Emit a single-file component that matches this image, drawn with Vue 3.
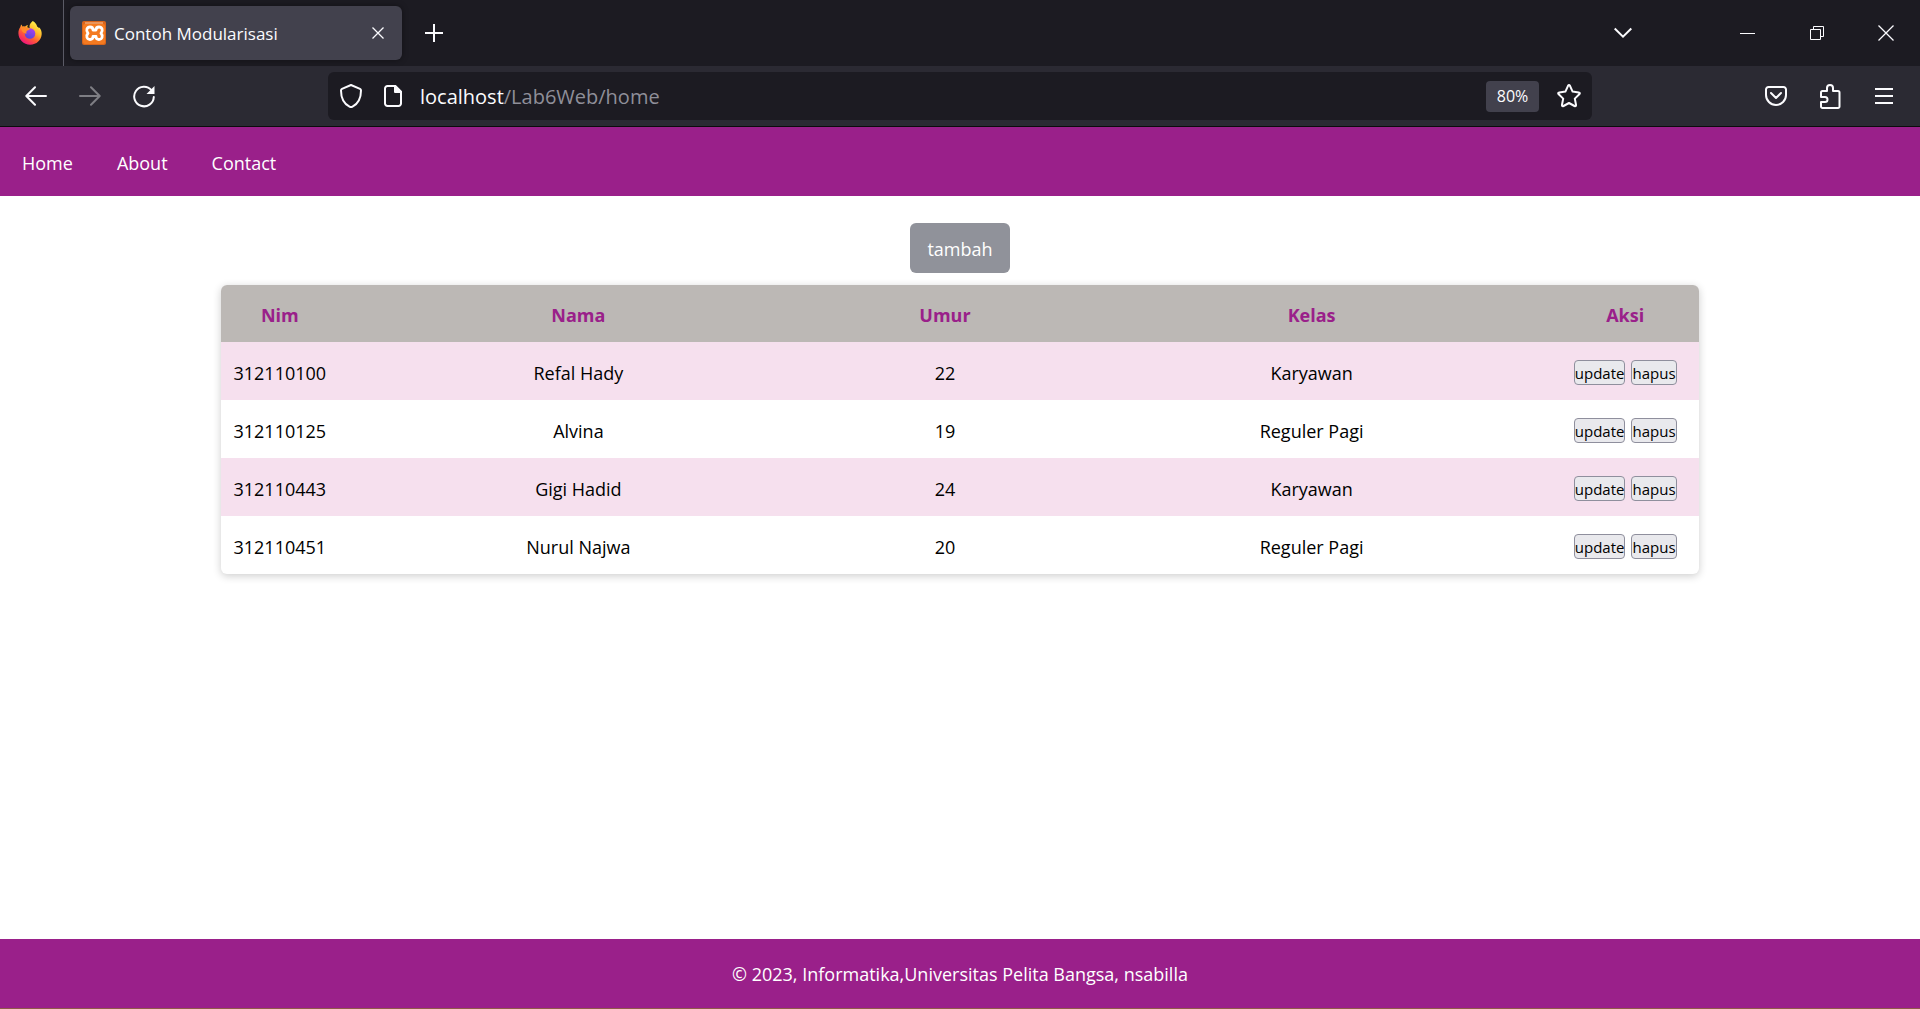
<script setup>
const links = ['Home', 'About', 'Contact']

const rows = [
  { nim: '312110100', nama: 'Refal Hady', umur: 22, kelas: 'Karyawan' },
  { nim: '312110125', nama: 'Alvina', umur: 19, kelas: 'Reguler Pagi' },
  { nim: '312110443', nama: 'Gigi Hadid', umur: 24, kelas: 'Karyawan' },
  { nim: '312110451', nama: 'Nurul Najwa', umur: 20, kelas: 'Reguler Pagi' },
]
</script>

<template>
  <div class="window">
    <header class="chrome">
      <div class="tab-strip">
        <div class="firefox-view">
          <svg width="24" height="24" viewBox="0 0 24 24" aria-hidden="true">
            <defs>
              <linearGradient id="flame" x1="0.8" y1="0.1" x2="0.25" y2="0.95">
                <stop offset="0" stop-color="#fff04a" />
                <stop offset="0.35" stop-color="#ffb52a" />
                <stop offset="0.65" stop-color="#ff5a36" />
                <stop offset="1" stop-color="#f0147c" />
              </linearGradient>
              <linearGradient id="globe" x1="0.8" y1="0" x2="0.3" y2="1">
                <stop offset="0" stop-color="#b13df0" />
                <stop offset="1" stop-color="#5146d9" />
              </linearGradient>
            </defs>
            <path fill="url(#flame)" d="M14.8 0c2.800 1.500 3.900 3.700 4.300 5.500.9.300 1.500 1 1.800 1.600.4-.2.500-.5.500-.5C23 8.500 23.800 10.600 23.700 13c-.3 6-5.200 10.700-11.500 10.700C5.500 23.700.5 18.500.4 12.300.3 9.200 1.500 7 2.400 5.900c0 0 .2-1.300 1.100-2.400l1 2.200c.8-.2 1.700-.1 2.500.1.800-1 2-1.600 3.200-1.700-.6.700-1 1.500-.9 2.100.500.500 1.300.7 2.500.800C10.900 4.500 12.500 1.500 14.800 0z" />
            <circle cx="12" cy="12.500" r="5.300" fill="url(#globe)" />
            <path fill="#ff8a2a" d="M2.700 6.500c2-1.400 4.600-1.200 6.300.2.700.5 1.800.7 2.800.7 0 1.200-1.300 1.800-2.500 2-1.200.9-1.200 2.400-.5 3.200-2.400-.1-4.200-1-4.700-2.600z" />
          </svg>
        </div>
        <div class="tab">
          <svg class="favicon" width="24" height="24" viewBox="0 0 24 24" aria-hidden="true">
            <rect width="24" height="24" rx="2" fill="#d9651b" />
            <rect x="1" y="3" width="22" height="20" rx="2" fill="#f47a20" />
            <path d="M3 2h18" stroke="#fbc79c" stroke-width="1" />
            <path fill="none" stroke="#fff" stroke-width="2.800" stroke-linejoin="round" d="M8 6c2.500 0 3 1.500 3 3h3c0-1.500.5-3 3-3 3 0 4.500 3.500 2 6.200 2.500 2.800 1 6.300-2 6.300-2.500 0-3-1.500-3-3h-3c0 1.500-.5 3-3 3-3 0-4.500-3.500-2-6.300-2.500-2.700-1-6.200 2-6.200z" />
          </svg>
          <span class="tab-title">Contoh Modularisasi</span>
          <button class="icon-button tab-close" aria-label="Close tab">
            <svg width="12" height="12" viewBox="0 0 12 12" stroke-width="1.300"><path d="M.5.5l11 11M11.500.5l-11 11" /></svg>
          </button>
        </div>
        <button class="icon-button new-tab" aria-label="New tab">
          <svg width="18" height="18" viewBox="0 0 18 18" stroke-width="2"><path d="M9 0v18M0 9h18" /></svg>
        </button>
        <div class="window-controls">
          <button class="icon-button list-tabs" aria-label="List all tabs">
            <svg width="18" height="12" viewBox="0 0 18 12" stroke-width="2"><path d="M.7 1.500L9 9.700l8.300-8.200" /></svg>
          </button>
          <button class="icon-button" aria-label="Minimize">
            <svg width="15" height="15" viewBox="0 0 15 15"><path d="M0 7.500h15" /></svg>
          </button>
          <button class="icon-button" aria-label="Restore">
            <svg width="14" height="14" viewBox="0 0 14 14"><path d="M.5 3.500h10v10H.5zM3.500 3.500v-3h10v10h-3" /></svg>
          </button>
          <button class="icon-button" aria-label="Close">
            <svg width="16" height="16" viewBox="0 0 16 16" stroke-width="1.300"><path d="M.5.5l15 15M15.500.5l-15 15" /></svg>
          </button>
        </div>
      </div>

      <div class="toolbar">
        <div class="nav-buttons">
          <button class="icon-button" aria-label="Back">
            <svg width="22" height="20" viewBox="0 0 22 20" stroke-width="2"><path d="M21 10H1.500M10 1.200L1.300 10l8.700 8.800" stroke-linecap="round" stroke-linejoin="round" /></svg>
          </button>
          <button class="icon-button dimmed" aria-label="Forward">
            <svg width="22" height="20" viewBox="0 0 22 20" stroke-width="2"><path d="M1 10h19.500M12 1.200l8.700 8.800-8.700 8.800" stroke-linecap="round" stroke-linejoin="round" /></svg>
          </button>
          <button class="icon-button" aria-label="Reload">
            <svg width="24" height="24" viewBox="0 0 24 24" stroke-width="2">
              <path d="M19.500 6.200A9.800 9.800 0 1 0 21.800 13" stroke-linecap="round" />
              <path d="M22.500 2v8h-8z" fill="#fbfbfe" stroke="none" />
            </svg>
          </button>
        </div>
        <div class="url-bar">
          <svg width="24" height="26" viewBox="0 0 24 26" stroke-width="2" stroke-linejoin="round" aria-hidden="true"><path d="M12 2l9 3.800q1 .5 1 1.600c0 8-3.500 13.500-8.500 16.200q-1.500.8-3 0C5.500 20.900 2 15.400 2 7.400q0-1.100 1-1.600z" /></svg>
          <svg class="page-icon" width="18" height="22" viewBox="0 0 18 22" stroke-width="2" stroke-linejoin="round" aria-hidden="true">
            <path d="M3.500 1h7.800L17 6.700v11.800a2.500 2.500 0 0 1-2.500 2.500h-11A2.500 2.500 0 0 1 1 18.500v-15A2.500 2.500 0 0 1 3.500 1z" />
            <path d="M11 1v6h6z" fill="#fbfbfe" />
          </svg>
          <div class="url"><span class="host">localhost</span>/Lab6Web/home</div>
          <button class="zoom-level">80%</button>
          <button class="icon-button bookmark" aria-label="Bookmark this page">
            <svg width="24" height="24" viewBox="0 0 24 24" stroke-width="2" stroke-linejoin="round"><path d="M11 1.900q1-1.600 2 0l2.600 5.700 6.100.8q1.900.4.600 1.900l-4.500 4.300 1.200 6.200q.2 1.900-1.500 1.200L12 19l-5.500 3q-1.700.7-1.500-1.200l1.200-6.200-4.500-4.300q-1.300-1.500.6-1.900l6.100-.8z" /></svg>
          </button>
        </div>
        <div class="menu-buttons">
          <button class="icon-button" aria-label="Save to Pocket">
            <svg width="22" height="20" viewBox="0 0 22 20" stroke-width="2" stroke-linejoin="round" stroke-linecap="round"><path d="M3.500 1h15A2.500 2.500 0 0 1 21 3.500V9a10 10 0 0 1-20 0V3.500A2.500 2.500 0 0 1 3.500 1zM6 7l5 5 5-5" /></svg>
          </button>
          <button class="icon-button" aria-label="Extensions">
            <svg width="22" height="26" viewBox="0 0 22 26" stroke-width="2" stroke-linejoin="round"><path d="M2 14V9.500A1.500 1.500 0 0 1 3.500 8H8V5a3 3 0 0 1 6 0v3h5a1.500 1.500 0 0 1 1.500 1.500v14A1.500 1.500 0 0 1 19 25H3.500A1.500 1.500 0 0 1 2 23.500V19h4a2.500 2.500 0 0 0 0-5z" /></svg>
          </button>
          <button class="icon-button" aria-label="Open application menu">
            <svg width="18" height="16" viewBox="0 0 18 16" stroke-width="2"><path d="M0 1h18M0 8h18M0 15h18" /></svg>
          </button>
        </div>
      </div>
    </header>

    <nav class="site-nav">
      <a v-for="link in links" :key="link" href="#">{{ link }}</a>
    </nav>

    <main class="content">
      <button class="add">tambah</button>
      <table class="students">
        <thead>
          <tr>
            <th class="col-nim">Nim</th>
            <th>Nama</th>
            <th class="col-umur">Umur</th>
            <th>Kelas</th>
            <th class="col-aksi">Aksi</th>
          </tr>
        </thead>
        <tbody>
          <tr v-for="row in rows" :key="row.nim">
            <td>{{ row.nim }}</td>
            <td>{{ row.nama }}</td>
            <td>{{ row.umur }}</td>
            <td>{{ row.kelas }}</td>
            <td>
              <div class="actions">
                <button>update</button>
                <button>hapus</button>
              </div>
            </td>
          </tr>
        </tbody>
      </table>
    </main>

    <footer class="site-footer">© 2023, Informatika,Universitas Pelita Bangsa, nsabilla</footer>
  </div>
</template>

<style>
body {
  margin: 0;
  background: #fff;
}
</style>

<style scoped>
.window {
  display: flex;
  flex-direction: column;
  min-height: 100vh;
  font-family: "Open Sans", "Noto Sans", sans-serif;
  font-size: 18px;
  line-height: 24px;
  color: #000;
}

button {
  box-sizing: border-box;
  margin: 0;
  font-family: inherit;
  cursor: pointer;
}

.chrome {
  color: #fbfbfe;
  background: #2b2a33;
  border-bottom: 1px solid #0c0c0d;
}

.chrome svg {
  display: block;
  flex: none;
  fill: none;
  stroke: #fbfbfe;
}

.firefox-view svg,
.chrome .favicon {
  stroke: none;
}

.icon-button {
  display: flex;
  align-items: center;
  justify-content: center;
  width: 48px;
  height: 48px;
  padding: 0;
  background: none;
  border: 0;
}

.tab-strip {
  display: flex;
  align-items: center;
  height: 66px;
  background: #1c1b22;
}

.firefox-view {
  display: flex;
  align-items: center;
  align-self: stretch;
  padding: 0 21px 0 18px;
  border-right: 1px solid #5b5b66;
}

.tab {
  display: flex;
  align-items: center;
  box-sizing: border-box;
  width: 332px;
  height: 54px;
  margin-left: 6px;
  padding: 0 6px 0 12px;
  background: #42414d;
  border-radius: 6px;
  box-shadow: 0 0 6px rgba(0, 0, 0, 0.4);
}

.tab-title {
  flex: 1;
  margin-left: 8px;
  padding-top: 2px;
  font-size: 17px;
}

.tab-close {
  width: 36px;
  height: 36px;
}

.new-tab {
  margin-left: 8px;
}

.window-controls {
  display: flex;
  align-items: center;
  margin-left: auto;
}

.window-controls .icon-button {
  width: 69px;
}

.window-controls .list-tabs {
  width: 48px;
  margin-right: 66px;
}

.toolbar {
  display: flex;
  align-items: center;
  height: 60px;
}

.nav-buttons,
.menu-buttons {
  display: flex;
  box-sizing: border-box;
  width: 328px;
  gap: 6px;
}

.nav-buttons {
  padding-left: 12px;
}

.menu-buttons {
  justify-content: flex-end;
  padding-right: 12px;
}

.dimmed {
  opacity: 0.4;
}

.url-bar {
  display: flex;
  flex: 1;
  align-items: center;
  box-sizing: border-box;
  height: 48px;
  padding-left: 11px;
  background: #1c1b22;
  border-radius: 6px;
}

.page-icon {
  margin: 0 18px 0 21px;
}

.url {
  flex: 1;
  padding-top: 2px;
  font-size: 20px;
  color: #8f8f99;
}

.host {
  color: #fbfbfe;
}

.zoom-level {
  width: 53px;
  height: 31px;
  margin-right: 7px;
  padding: 0;
  font-size: 16px;
  color: #fbfbfe;
  background: #42414d;
  border: 0;
  border-radius: 4px;
}

.icon-button.bookmark {
  width: 46px;
}

.site-nav {
  display: flex;
  align-items: center;
  height: 69px;
  background: #9a208a;
}

.site-nav a {
  padding: 24px 22px 22px;
  color: #fff;
  text-decoration: none;
}

.content {
  display: flex;
  flex: 1;
  flex-direction: column;
  align-items: center;
  gap: 12px;
  padding-top: 27px;
}

.add {
  height: 50px;
  padding: 2px 17px 0;
  font-size: 18px;
  color: #fff;
  background: #90929a;
  border: 0;
  border-radius: 6px;
}

.students {
  width: 77%;
  table-layout: fixed;
  border-spacing: 0;
  overflow: hidden;
  text-align: center;
  border-radius: 6px;
  box-shadow: 0 2px 8px rgba(0, 0, 0, 0.2);
}

.col-nim {
  width: 118px;
}

.col-umur {
  width: 254px;
}

.col-aksi {
  width: 148px;
}

th,
td {
  height: 58px;
  padding: 3px 0 0;
  box-sizing: border-box;
}

th {
  height: 57px;
  font-weight: 700;
  color: #9a208a;
  background: #bcb8b5;
}

tbody tr:nth-child(odd) {
  background: #f6e0ee;
}

.actions {
  display: flex;
  justify-content: center;
  gap: 6px;
}

.actions button {
  height: 25px;
  padding: 1px 0 0;
  font-size: 15px;
  line-height: 22px;
  color: #000;
  background: #e9e9ed;
  border: 1px solid #8f8f9d;
  border-radius: 4px;
}

.site-footer {
  padding: 23px 0 22px;
  text-align: center;
  color: #fff;
  background: #9a208a;
  border-bottom: 1px solid #8f5a4a;
}
</style>
